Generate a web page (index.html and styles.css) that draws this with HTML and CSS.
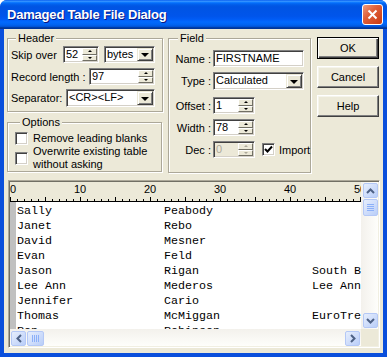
FILE: index.html
```html
<!DOCTYPE html>
<html lang="en">
<head>
    <meta charset="UTF-8">
    <meta name="viewport" content="width=device-width, initial-scale=1.0">
    <title>Damaged Table File Dialog</title>
    <link rel="stylesheet" href="styles.css">
</head>
<body>
    <div class="dlg-window">
        <div class="dlg-titlebar">
            <span class="dlg-title">Damaged Table File Dialog</span>
            <span class="dlg-close">
                <svg width="11" height="11" viewBox="0 0 11 11"><path d="M1.5 1.5 L9.5 9.5 M9.5 1.5 L1.5 9.5" stroke="#fff" stroke-width="2"/></svg>
            </span>
        </div>

        <div class="dlg-client">
            <div class="dlg-top">
                <div class="dlg-leftcol">
                    <fieldset class="grp grp-header">
                        <legend>Header</legend>
                        <div class="frow row-skip">
                            <span class="lbl lbl-skip">Skip over</span>
                            <div class="edit spin w-skip"><span class="val">52</span><span class="spinbtn"><i class="up"></i><i class="dn"></i></span></div>
                            <div class="edit combo w-bytes"><span class="val">bytes</span><span class="dropbtn"><i></i></span></div>
                        </div>
                        <div class="frow row-record">
                            <span class="lbl lbl-record">Record length :</span>
                            <div class="edit spin w-record"><span class="val">97</span><span class="spinbtn"><i class="up"></i><i class="dn"></i></span></div>
                        </div>
                        <div class="frow row-sep">
                            <span class="lbl lbl-sep">Separator:</span>
                            <div class="edit combo w-sep"><span class="val">&lt;CR&gt;&lt;LF&gt;</span><span class="dropbtn"><i></i></span></div>
                        </div>
                    </fieldset>

                    <fieldset class="grp grp-options">
                        <legend>Options</legend>
                        <div class="chkrow chk-one">
                            <span class="chk"></span>
                            <span class="chk-text">Remove leading blanks</span>
                        </div>
                        <div class="chkrow chk-two">
                            <span class="chk"></span>
                            <span class="chk-text">Overwrite existing table<br>without asking</span>
                        </div>
                    </fieldset>
                </div>

                <fieldset class="grp grp-field">
                    <legend>Field</legend>
                    <div class="frow f-name">
                        <span class="flbl">Name :</span>
                        <div class="edit w-wide"><span class="val">FIRSTNAME</span></div>
                    </div>
                    <div class="frow f-type">
                        <span class="flbl">Type :</span>
                        <div class="edit combo w-wide"><span class="val">Calculated</span><span class="dropbtn"><i></i></span></div>
                    </div>
                    <div class="frow f-offset">
                        <span class="flbl">Offset :</span>
                        <div class="edit spin w-small"><span class="val">1</span><span class="spinbtn"><i class="up"></i><i class="dn"></i></span></div>
                    </div>
                    <div class="frow f-width">
                        <span class="flbl">Width :</span>
                        <div class="edit spin w-small"><span class="val">78</span><span class="spinbtn"><i class="up"></i><i class="dn"></i></span></div>
                    </div>
                    <div class="frow f-dec">
                        <span class="flbl">Dec :</span>
                        <div class="edit spin w-small disabled"><span class="val">0</span><span class="spinbtn"><i class="up"></i><i class="dn"></i></span></div>
                        <span class="chk checked">
                            <svg width="9" height="9" viewBox="0 0 9 9"><path d="M1 4 L3.5 6.5 L8 1.5" fill="none" stroke="#000" stroke-width="2"/></svg>
                        </span>
                        <span class="chk-text">Import</span>
                    </div>
                </fieldset>

                <div class="dlg-buttons">
                    <button class="btn btn-default">OK</button>
                    <button class="btn">Cancel</button>
                    <button class="btn">Help</button>
                </div>
            </div>

            <div class="tbl-panel">
                <div class="tbl-main">
                    <div class="ruler">
                        <div class="ruler-labels">
                            <span>0</span><span>10</span><span>20</span><span>30</span><span>40</span><span>50</span>
                        </div>
                        <div class="ruler-ticks"></div>
                    </div>
                    <div class="tbl-body">
                        <div class="tbl-gutter"></div>
                        <div class="tbl-rows">
                            <div class="trow"><span>Sally</span><span>Peabody</span><span></span></div>
                            <div class="trow"><span>Janet</span><span>Rebo</span><span></span></div>
                            <div class="trow"><span>David</span><span>Mesner</span><span></span></div>
                            <div class="trow"><span>Evan</span><span>Feld</span><span></span></div>
                            <div class="trow"><span>Jason</span><span>Rigan</span><span>South Bend</span></div>
                            <div class="trow"><span>Lee Ann</span><span>Mederos</span><span>Lee Ann</span></div>
                            <div class="trow"><span>Jennifer</span><span>Cario</span><span></span></div>
                            <div class="trow"><span>Thomas</span><span>McMiggan</span><span>EuroTrek</span></div>
                            <div class="trow"><span>Ron</span><span>Robinson</span><span></span></div>
                        </div>
                    </div>
                </div>
                <div class="vscroll">
                    <span class="sb-btn">
                        <svg width="9" height="6" viewBox="0 0 9 6"><path d="M1 5 L4.5 1.5 L8 5" fill="none" stroke="#4D6185" stroke-width="2"/></svg>
                    </span>
                    <span class="sb-thumb sb-thumb-v">
                        <svg width="7" height="8" viewBox="0 0 7 8"><path d="M0 0.5 H7 M0 2.5 H7 M0 4.5 H7 M0 6.5 H7" stroke="#8CB0F8" stroke-width="1"/></svg>
                    </span>
                    <span class="sb-track"></span>
                    <span class="sb-btn">
                        <svg width="9" height="6" viewBox="0 0 9 6"><path d="M1 1 L4.5 4.5 L8 1" fill="none" stroke="#4D6185" stroke-width="2"/></svg>
                    </span>
                </div>
                <div class="hscroll">
                    <span class="sb-btn">
                        <svg width="6" height="9" viewBox="0 0 6 9"><path d="M5 1 L1.5 4.5 L5 8" fill="none" stroke="#4D6185" stroke-width="2"/></svg>
                    </span>
                    <span class="sb-thumb sb-thumb-h">
                        <svg width="8" height="7" viewBox="0 0 8 7"><path d="M0.5 0 V7 M2.5 0 V7 M4.5 0 V7 M6.5 0 V7" stroke="#8CB0F8" stroke-width="1"/></svg>
                    </span>
                    <span class="sb-track"></span>
                    <span class="sb-btn">
                        <svg width="6" height="9" viewBox="0 0 6 9"><path d="M1 1 L4.5 4.5 L1 8" fill="none" stroke="#4D6185" stroke-width="2"/></svg>
                    </span>
                </div>
                <div class="sb-corner"></div>
            </div>
        </div>
    </div>
</body>
</html>
```

FILE: styles.css
```css
/* XP-style dialog window */
body {
    margin: 0;
    font-family: "Liberation Sans", Arial, sans-serif;
    font-size: 11px;
    color: #000;
}

.dlg-window {
    width: 387px;
    height: 357px;
    display: flex;
    flex-direction: column;
    background-color: #0A4FDC;
    border-radius: 7px 7px 0 0;
    overflow: hidden;
}

.dlg-titlebar {
    height: 29px;
    flex: none;
    display: flex;
    align-items: center;
    padding-left: 7px;
    background: linear-gradient(to bottom, #0058EE 0%, #3A93FF 4%, #288EFF 6%, #127DFF 8%, #036FFC 10%, #0262EE 14%, #0057E5 20%, #0054E3 24%, #0055EB 56%, #005BF5 66%, #026AFE 76%, #0062EF 86%, #0052D6 92%, #0040AB 94%, #003092 100%);
}

.dlg-title {
    font-weight: bold;
    font-size: 13px;
    letter-spacing: -0.2px;
    color: #fff;
    text-shadow: 1px 1px #0A1883;
}

.dlg-close {
    margin-left: auto;
    margin-right: 4px;
    width: 21px;
    height: 21px;
    box-sizing: border-box;
    border: 1px solid #fff;
    border-radius: 3px;
    display: flex;
    align-items: center;
    justify-content: center;
    background: linear-gradient(135deg, #F09C7F 0%, #E0603A 40%, #C93A12 100%);
}

.dlg-client {
    flex: 1;
    margin: 0 4px 4px 4px;
    background-color: #ECE9D8;
    padding: 3px 3px 0 3px;
    box-sizing: border-box;
}

.dlg-top {
    display: flex;
    align-items: flex-start;
}

.dlg-leftcol {
    display: flex;
    flex-direction: column;
    width: 156px;
}

/* Group boxes */
.grp {
    margin: 0;
    min-width: 0;
    box-sizing: border-box;
    border: 1px solid #ACA899;
    box-shadow: 1px 1px 0 #fff, inset 1px 1px 0 #fff;
}

.grp legend {
    padding: 0 2px;
    margin-left: 5px;
    line-height: 13px;
    background-color: #ECE9D8;
}

.grp-header {
    width: 156px;
    padding: 1px 0 4px 3px;
}

.grp-options {
    width: 155px;
    margin-top: 4px;
    padding: 2px 0 0 7px;
    height: 56px;
}

.grp-field {
    width: 143px;
    margin-left: 5px;
    padding: 5px 0 14px 0;
}

.grp-field legend {
    margin-left: 9px;
}

.frow {
    display: flex;
    align-items: center;
    height: 17px;
}

.lbl {
    flex: none;
}

.lbl-skip { width: 52px; }
.lbl-record { width: 78px; }
.lbl-sep { width: 55px; }

.row-record { margin-top: 5px; }
.row-sep { margin-top: 4px; height: 18px; }

.flbl {
    width: 42px;
    padding-right: 2px;
    text-align: right;
    flex: none;
}

.f-type { margin-top: 5px; height: 18px; }
.f-offset { margin-top: 7px; }
.f-width { margin-top: 5px; }
.f-dec { margin-top: 5px; }

/* Sunken edit fields */
.edit {
    box-sizing: border-box;
    height: 100%;
    display: flex;
    padding: 1px;
    background-color: #fff;
    border: 1px solid;
    border-color: #808080 #fff #fff #808080;
    box-shadow: inset 1px 1px #404040, inset -1px -1px #D4D0C8;
    flex: none;
}

.edit .val {
    flex: 1;
    padding-left: 1px;
    line-height: 13px;
    white-space: nowrap;
    overflow: hidden;
}

.edit.disabled {
    background-color: #ECE9D8;
    color: #ACA899;
}

.w-skip { width: 36px; }
.w-bytes { width: 51px; margin-left: 5px; }
.w-record { width: 66px; }
.w-sep { width: 89px; }
.w-wide { width: 91px; }
.w-small { width: 42px; }

.spinbtn {
    width: 15px;
    display: flex;
    flex-direction: column;
}

.spinbtn i {
    flex: 1;
    box-sizing: border-box;
    display: flex;
    align-items: center;
    justify-content: center;
    background-color: #ECE9D8;
    border: 1px solid;
    border-color: #fff #716F64 #716F64 #fff;
}

.spinbtn i::after {
    content: "";
    border-left: 2px solid transparent;
    border-right: 2px solid transparent;
}

.spinbtn .up::after { border-bottom: 2px solid #000; }
.spinbtn .dn::after { border-top: 2px solid #000; }

.disabled .spinbtn .up::after { border-bottom-color: #ACA899; }
.disabled .spinbtn .dn::after { border-top-color: #ACA899; }

.dropbtn {
    width: 16px;
    box-sizing: border-box;
    display: flex;
    align-items: center;
    justify-content: center;
    background-color: #ECE9D8;
    border: 1px solid;
    border-color: #ECE9D8 #404040 #404040 #ECE9D8;
    box-shadow: inset 1px 1px #fff, inset -1px -1px #808080;
}

.dropbtn i {
    border-left: 4px solid transparent;
    border-right: 4px solid transparent;
    border-top: 4px solid #000;
    margin-top: 1px;
}

/* Checkboxes */
.chkrow {
    display: flex;
    align-items: center;
}

.chk-one { height: 14px; }
.chk-two { margin-top: 0; line-height: 13px; }

.chk {
    width: 13px;
    height: 13px;
    box-sizing: border-box;
    flex: none;
    display: flex;
    align-items: center;
    justify-content: center;
    background-color: #fff;
    border: 1px solid;
    border-color: #808080 #fff #fff #808080;
    box-shadow: inset 1px 1px #404040, inset -1px -1px #D4D0C8;
}

.chk-text {
    margin-left: 5px;
}

.f-dec .chk {
    margin-left: 7px;
}

.f-dec .chk-text {
    margin-left: 4px;
}

/* Push buttons */
.dlg-buttons {
    display: flex;
    flex-direction: column;
    gap: 7px;
    margin-left: 6px;
    margin-top: 5px;
}

.btn {
    width: 62px;
    height: 22px;
    box-sizing: border-box;
    padding: 0;
    font-family: inherit;
    font-size: 11px;
    color: #000;
    background-color: #ECE9D8;
    border: 1px solid;
    border-color: #fff #404040 #404040 #fff;
    box-shadow: inset -1px -1px #808080, inset 1px 1px #F5F4EC;
}

.btn-default {
    border: 1px solid #000;
    box-shadow: inset 1px 1px #fff, inset -1px -1px #404040, inset -2px -2px #808080;
}

/* Table preview */
.tbl-panel {
    margin: 7px 0 0 1px;
    width: 372px;
    height: 168px;
    box-sizing: border-box;
    border: 1px solid;
    border-color: #ACA899 #fff #fff #ACA899;
    box-shadow: inset 1px 1px #716F64, inset -1px -1px #F1EFE2;
    padding: 1px;
    display: grid;
    grid-template-columns: 351px 17px;
    grid-template-rows: 147px 17px;
}

.tbl-main {
    overflow: hidden;
    display: flex;
    flex-direction: column;
}

.ruler {
    height: 20px;
    flex: none;
    background-color: #ECE9D8;
    display: flex;
    flex-direction: column;
}

.ruler-labels {
    display: flex;
    height: 13px;
    line-height: 13px;
    margin-top: 1px;
    white-space: nowrap;
}

.ruler-labels span {
    flex: none;
    width: 70px;
    text-align: center;
}

.ruler-labels span:first-child {
    width: 35px;
    text-align: left;
}

.ruler-ticks {
    height: 6px;
    background:
        linear-gradient(#000, #000) left bottom / 100% 1px no-repeat,
        repeating-linear-gradient(to right, #000 0 1px, transparent 1px 35px) left bottom / 100% 5px no-repeat,
        repeating-linear-gradient(to right, #000 0 1px, transparent 1px 7px) left bottom / 100% 3px no-repeat;
}

.tbl-body {
    flex: 1;
    display: flex;
    background-color: #fff;
    overflow: hidden;
}

.tbl-gutter {
    width: 6px;
    flex: none;
    background-color: #C0C0C0;
}

.tbl-rows {
    margin-left: 1px;
    padding-top: 2px;
    font-family: "Liberation Mono", "Courier New", monospace;
    font-size: 11.67px;
    line-height: 15px;
}

.trow {
    display: grid;
    grid-template-columns: 147px 148px 100px;
    white-space: pre;
}

/* Scrollbars */
.vscroll, .hscroll {
    display: flex;
    background: linear-gradient(to right, #F3F1EC, #FEFEFB);
    gap: 1px;
}

.vscroll {
    flex-direction: column;
    padding: 1px 1px 1px 2px;
}

.hscroll {
    padding: 2px 1px 1px 1px;
    background: linear-gradient(to bottom, #F3F1EC, #FEFEFB);
}

.sb-btn, .sb-thumb {
    width: 15px;
    height: 15px;
    flex: none;
    box-sizing: border-box;
    display: flex;
    align-items: center;
    justify-content: center;
    border: 1px solid #B4C8F6;
    border-radius: 2px;
    background: linear-gradient(135deg, #E6EEFC 0%, #D0DEFB 50%, #B9CEF8 100%);
}

.sb-thumb-v { height: 17px; }
.sb-thumb-h { width: 17px; }

.sb-track {
    flex: 1;
}

.sb-corner {
    background-color: #ECE9D8;
}
```
